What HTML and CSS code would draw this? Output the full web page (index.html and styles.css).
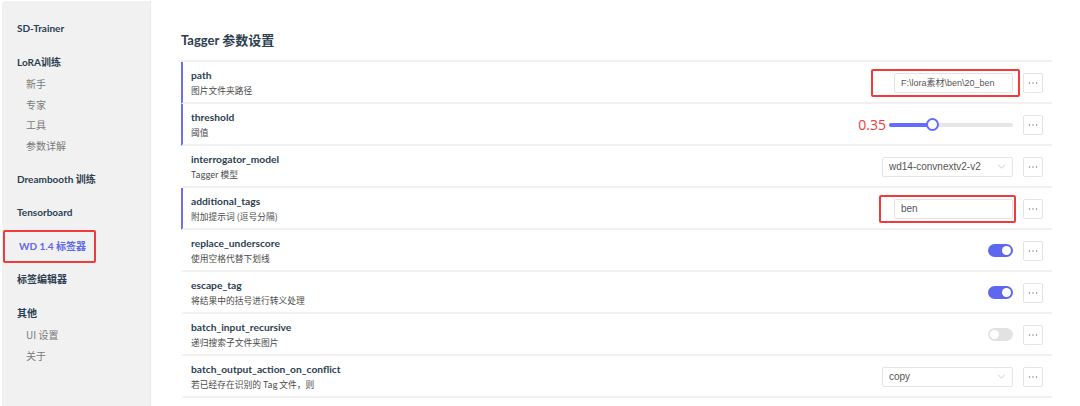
FILE: index.html
```html
<!DOCTYPE html>
<html lang="zh">
<head>
<meta charset="utf-8">
<title>Tagger</title>
<link rel="stylesheet" href="styles.css">
</head>
<body>
<div class="app">
  <aside class="sidebar">
    <div class="nav-group"><div class="nav-title">SD-Trainer</div></div>
    <div class="nav-group has-items">
      <div class="nav-title">LoRA训练</div>
      <div class="nav-item">新手</div>
      <div class="nav-item">专家</div>
      <div class="nav-item">工具</div>
      <div class="nav-item">参数详解</div>
    </div>
    <div class="nav-group"><div class="nav-title">Dreambooth 训练</div></div>
    <div class="nav-group"><div class="nav-title">Tensorboard</div></div>
    <div class="nav-group"><div class="nav-title active"><span class="hl-box">WD 1.4 标签器</span></div></div>
    <div class="nav-group"><div class="nav-title">标签编辑器</div></div>
    <div class="nav-group has-items">
      <div class="nav-title">其他</div>
      <div class="nav-item">UI 设置</div>
      <div class="nav-item">关于</div>
    </div>
  </aside>
  <main class="main">
    <h1 class="page-title">Tagger 参数设置</h1>
    <div class="rows">
      <div class="row modified">
        <div class="label"><div class="name">path</div><div class="desc">图片文件夹路径</div></div>
        <div class="control">
          <span class="hl-input"><span class="input">F:\lora素材\ben\20_ben</span></span>
          <span class="more"><svg viewBox="0 0 10 2" width="10" height="2"><circle cx="1.5" cy="1" r="0.7"/><circle cx="5" cy="1" r="0.7"/><circle cx="8.5" cy="1" r="0.7"/></svg></span>
        </div>
      </div>
      <div class="row modified">
        <div class="label"><div class="name">threshold</div><div class="desc">阈值</div></div>
        <div class="control">
          <span class="value-note">0.35</span>
          <span class="slider"><span class="fill" style="width:35%"></span><span class="thumb" style="left:35%"></span></span>
          <span class="more"><svg viewBox="0 0 10 2" width="10" height="2"><circle cx="1.5" cy="1" r="0.7"/><circle cx="5" cy="1" r="0.7"/><circle cx="8.5" cy="1" r="0.7"/></svg></span>
        </div>
      </div>
      <div class="row">
        <div class="label"><div class="name">interrogator_model</div><div class="desc">Tagger 模型</div></div>
        <div class="control">
          <span class="select">wd14-convnextv2-v2<svg class="chev" viewBox="0 0 10 6" width="9" height="5"><path d="M1 1l4 4 4-4" fill="none" stroke="#c0c4cc" stroke-width="1"/></svg></span>
          <span class="more"><svg viewBox="0 0 10 2" width="10" height="2"><circle cx="1.5" cy="1" r="0.7"/><circle cx="5" cy="1" r="0.7"/><circle cx="8.5" cy="1" r="0.7"/></svg></span>
        </div>
      </div>
      <div class="row modified">
        <div class="label"><div class="name">additional_tags</div><div class="desc">附加提示词 (逗号分隔)</div></div>
        <div class="control">
          <span class="hl-input2"><span class="input">ben</span></span>
          <span class="more"><svg viewBox="0 0 10 2" width="10" height="2"><circle cx="1.5" cy="1" r="0.7"/><circle cx="5" cy="1" r="0.7"/><circle cx="8.5" cy="1" r="0.7"/></svg></span>
        </div>
      </div>
      <div class="row">
        <div class="label"><div class="name">replace_underscore</div><div class="desc">使用空格代替下划线</div></div>
        <div class="control">
          <span class="toggle on"><span class="knob"></span></span>
          <span class="more"><svg viewBox="0 0 10 2" width="10" height="2"><circle cx="1.5" cy="1" r="0.7"/><circle cx="5" cy="1" r="0.7"/><circle cx="8.5" cy="1" r="0.7"/></svg></span>
        </div>
      </div>
      <div class="row">
        <div class="label"><div class="name">escape_tag</div><div class="desc">将结果中的括号进行转义处理</div></div>
        <div class="control">
          <span class="toggle on"><span class="knob"></span></span>
          <span class="more"><svg viewBox="0 0 10 2" width="10" height="2"><circle cx="1.5" cy="1" r="0.7"/><circle cx="5" cy="1" r="0.7"/><circle cx="8.5" cy="1" r="0.7"/></svg></span>
        </div>
      </div>
      <div class="row">
        <div class="label"><div class="name">batch_input_recursive</div><div class="desc">递归搜索子文件夹图片</div></div>
        <div class="control">
          <span class="toggle"><span class="knob"></span></span>
          <span class="more"><svg viewBox="0 0 10 2" width="10" height="2"><circle cx="1.5" cy="1" r="0.7"/><circle cx="5" cy="1" r="0.7"/><circle cx="8.5" cy="1" r="0.7"/></svg></span>
        </div>
      </div>
      <div class="row">
        <div class="label"><div class="name">batch_output_action_on_conflict</div><div class="desc">若已经存在识别的 Tag 文件，则</div></div>
        <div class="control">
          <span class="select">copy<svg class="chev" viewBox="0 0 10 6" width="9" height="5"><path d="M1 1l4 4 4-4" fill="none" stroke="#c0c4cc" stroke-width="1"/></svg></span>
          <span class="more"><svg viewBox="0 0 10 2" width="10" height="2"><circle cx="1.5" cy="1" r="0.7"/><circle cx="5" cy="1" r="0.7"/><circle cx="8.5" cy="1" r="0.7"/></svg></span>
        </div>
      </div>
    </div>
  </main>
</div>
</body>
</html>
```

FILE: styles.css
```css
* { box-sizing: border-box; }
html, body { margin: 0; padding: 0; background: #fff; }
body {
  font-family: "Noto Sans CJK SC", "Noto Sans", sans-serif;
  color: #213547;
  width: 1080px;
  height: 406px;
  overflow: hidden;
}
.app {
  display: flex;
  height: 406px;
  padding-left: 2px;
}
.sidebar {
  width: 149px;
  flex: none;
  background: #f1f1f1;
  border-top-left-radius: 4px;
  border-right: 1px solid #e8e8e8;
  padding: 17px 0 0 15px;
  margin-top: 1px;
}
.nav-group { margin-bottom: 13.5px; }
.nav-group.has-items { margin-bottom: 12.5px; }
.nav-title {
  font-family: Lato, "Noto Sans CJK SC", sans-serif;
  font-size: 10px;
  font-weight: 700;
  line-height: 20px;
  color: #2c3e50;
}
.nav-title.active { color: #5f67ee; }
.hl-box {
  display: inline-block;
  margin-left: -14px;
  padding: 6px 8px 6px 14px;
  border: 2px solid #f2393b;
  border-radius: 2px;
  line-height: 17px;
  margin-top: -8px;
  margin-bottom: -9px;
}
.nav-item {
  font-size: 10px;
  line-height: 20.5px;
  color: #7a7a7a;
  padding-left: 9px;
}
.nav-title + .nav-item { margin-top: 2.5px; }
.main {
  flex: 1;
  padding: 0 27px 0 30px;
}
.page-title {
  font-family: Lato, "Noto Sans CJK SC", sans-serif;
  font-size: 13px;
  font-weight: 700;
  margin: 30px 0 0 0;
  line-height: 20px;
  color: #2c3e50;
  height: 30px;
}
.rows {
  width: 871px;
  border-top: 2px solid #f1f1f1;
}
.row {
  display: flex;
  align-items: center;
  justify-content: space-between;
  height: 42px;
  border-bottom: 2px solid #f1f1f1;
  border-left: 2px solid transparent;
  padding: 1px 9px 0 8px;
}
.row.modified { border-left-color: #6c70f0; }
.label { display: flex; flex-direction: column; }
.name {
  font-family: Lato, "Noto Sans CJK SC", sans-serif;
  font-size: 10.25px;
  font-weight: 700;
  line-height: 15px;
  color: #2c3e50;
}
.desc {
  font-size: 8.75px;
  line-height: 15px;
  color: #4a4a4a;
}
.control {
  display: flex;
  align-items: center;
  gap: 10px;
}
.more {
  width: 20px;
  height: 20px;
  border: 1px solid #e4e4e4;
  border-radius: 2px;
  display: flex;
  align-items: center;
  justify-content: center;
  fill: #777;
}
.more svg { display: block; }
.input, .select {
  width: 119px;
  height: 20px;
  border: 1px solid #e4e4e4;
  border-radius: 2px;
  font-family: "Liberation Sans", "Noto Sans CJK SC", sans-serif;
  font-size: 10px;
  color: #555;
  display: flex;
  align-items: center;
  padding-left: 6px;
  background: #fff;
}
.hl-input .input { font-size: 9px; }
.hl-input {
  border: 2px solid #f2393b;
  border-radius: 2px;
  padding: 2px 5px 2px 21px;
  margin: -3px -7px -3px 0;
}
.hl-input2 {
  border: 2px solid #f2393b;
  border-radius: 2px;
  padding: 2px 1px 2px 13px;
  margin: -3px -3px -3px 0;
}
.select {
  width: 131px;
  justify-content: space-between;
  padding-right: 6px;
}
.chev { flex: none; }
.value-note {
  font-family: "Open Sans", sans-serif;
  color: #f2393b;
  font-size: 14px;
  margin-right: -7px;
}
.slider {
  position: relative;
  width: 124px;
  height: 4px;
  background: #e6e6e6;
  border-radius: 2px;
}
.slider .fill {
  position: absolute;
  left: 0; top: 0; bottom: 0;
  background: #646cff;
  border-radius: 2px;
}
.slider .thumb {
  position: absolute;
  top: 50%;
  width: 13px;
  height: 13px;
  margin: -6.5px 0 0 -6.5px;
  border: 2px solid #646cff;
  background: #fff;
  border-radius: 50%;
}
.toggle {
  position: relative;
  width: 25px;
  height: 13px;
  border-radius: 7px;
  background: #e2e2e2;
}
.toggle.on { background: #5f67ee; }
.toggle .knob {
  position: absolute;
  top: 2px;
  left: 2px;
  width: 9px;
  height: 9px;
  border-radius: 50%;
  background: #fff;
}
.toggle.on .knob { left: 14px; }
```
